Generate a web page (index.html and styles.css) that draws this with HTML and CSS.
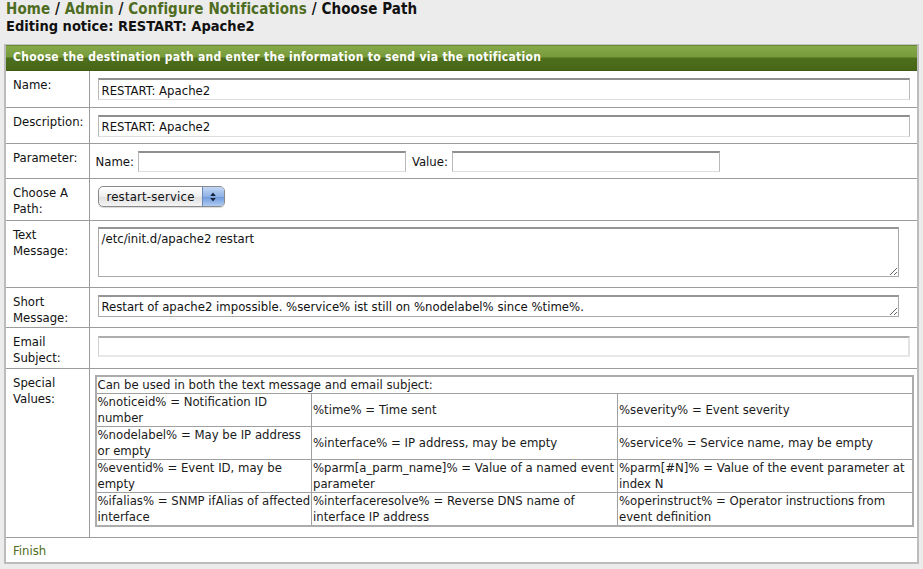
FILE: index.html
```html
<!DOCTYPE html>
<html>
<head>
<meta charset="utf-8">
<link rel="stylesheet" href="styles.css">
</head>
<body>
<div class="crumbs"><a href="#">Home</a> / <a href="#">Admin</a> / <a href="#">Configure Notifications</a> / Choose Path</div>
<h2 class="title">Editing notice: RESTART: Apache2</h2>
<table class="box">
  <colgroup><col class="col-lbl"><col class="col-val"></colgroup>
  <tr><th colspan="2" class="head">Choose the destination path and enter the information to send via the notification</th></tr>
  <tr class="r-name"><td class="lbl">Name:</td><td class="val"><input class="wide" type="text" value="RESTART: Apache2"></td></tr>
  <tr class="r-desc"><td class="lbl">Description:</td><td class="val"><input class="wide" type="text" value="RESTART: Apache2"></td></tr>
  <tr class="r-param"><td class="lbl">Parameter:</td><td class="val param"><span>Name:</span><input class="half" type="text"><span class="vlab">Value:</span><input class="half" type="text"></td></tr>
  <tr class="r-path"><td class="lbl">Choose A Path:</td><td class="val"><div class="select"><span class="sel-text">restart-service</span><span class="sel-arrows"><svg width="8" height="12" viewBox="0 0 8 12"><path d="M4 1.5 L6.8 5 H1.2 Z M4 10.5 L6.8 7 H1.2 Z" fill="#15233d"/></svg></span></div></td></tr>
  <tr class="r-text"><td class="lbl">Text Message:</td><td class="val"><textarea class="ta big">/etc/init.d/apache2 restart</textarea></td></tr>
  <tr class="r-short"><td class="lbl">Short Message:</td><td class="val"><textarea class="ta small">Restart of apache2 impossible. %service% ist still on %nodelabel% since %time%.</textarea></td></tr>
  <tr class="r-mail"><td class="lbl">Email Subject:</td><td class="val"><input class="wide dim" type="text"></td></tr>
  <tr class="r-special"><td class="lbl">Special Values:</td><td class="val sv">
    <table class="vals">
      <colgroup><col class="v1"><col class="v2"><col class="v3"></colgroup>
      <tr class="first"><td colspan="3">Can be used in both the text message and email subject:</td></tr>
      <tr><td>%noticeid% = Notification ID number</td><td>%time% = Time sent</td><td>%severity% = Event severity</td></tr>
      <tr><td>%nodelabel% = May be IP address or empty</td><td>%interface% = IP address, may be empty</td><td>%service% = Service name, may be empty</td></tr>
      <tr><td>%eventid% = Event ID, may be empty</td><td>%parm[a_parm_name]% = Value of a named event parameter</td><td>%parm[#N]% = Value of the event parameter at index N</td></tr>
      <tr><td>%ifalias% = SNMP ifAlias of affected interface</td><td>%interfaceresolve% = Reverse DNS name of interface IP address</td><td>%operinstruct% = Operator instructions from event definition</td></tr>
    </table>
  </td></tr>
  <tr class="r-finish"><td colspan="2" class="finish"><a href="#">Finish</a></td></tr>
</table>
</body>
</html>
```

FILE: styles.css
```css
html, body {
  margin: 0;
  padding: 0;
  background: #ececec;
  font-family: "DejaVu Sans Condensed", "DejaVu Sans", sans-serif;
  font-size: 13px;
  color: #111;
}
body {
  padding: 0 0 0 4px;
  width: 915px;
}
a {
  color: #4f6d22;
  text-decoration: none;
}
.crumbs {
  font-weight: bold;
  font-size: 15px;
  line-height: 17px;
  padding: 1px 0 0 2px;
  letter-spacing: 0.1px;
  color: #111;
}
.title {
  margin: 0;
  font-size: 14.5px;
  line-height: 17px;
  padding-left: 2px;
  padding-bottom: 9px;
}
.box {
  width: 915px;
  table-layout: fixed;
  border-collapse: collapse;
  background: #fff;
  border: 2px solid #bcbcbc;
  border-top: 1px solid #c4c4c4;
}
.col-lbl { width: 84px; }
.box > tbody > tr > td {
  border-top: 1px solid #9c9c9c;
  border-bottom: 1px solid #9c9c9c;
}
.head {
  text-align: left;
  color: #fff;
  font-size: 12px;
  letter-spacing: 0.3px;
  height: 24px;
  padding: 0 0 1px 7px;
  background: linear-gradient(#86a94a 0%, #76993a 48%, #4e6f1c 49%, #466616 100%);
  border-bottom: 1px solid #3f5a14;
}
.lbl {
  vertical-align: top;
  padding: 6px 0 0 7px;
  border-right: 1px solid #9c9c9c;
  line-height: 16px;
  color: #111;
}
.val {
  padding: 0 0 0 8px;
  vertical-align: middle;
}
.r-name .lbl { height: 30px; }
.r-desc .lbl { height: 29px; }
.r-param .lbl { height: 28px; }
.r-path .lbl { height: 35px; }
.r-text .lbl { height: 60px; }
.r-short .lbl { height: 33px; }
.r-mail .lbl { height: 34px; }
.r-path .val { vertical-align: top; padding-top: 7px; }
.r-text .val { vertical-align: top; padding-top: 6px; }
.r-short .val { vertical-align: top; padding-top: 7px; }
.r-mail .val { vertical-align: top; padding-top: 8px; }
.wide {
  display: block;
  box-sizing: border-box;
  width: 812px;
  height: 22px;
  margin: 0;
  padding: 1px 3px 0;
  border: 1px solid #b8b8b8;
  border-top: 2px solid #8f8f8f;
  border-bottom: 1px solid #dedede;
  font: 13px "DejaVu Sans Condensed", "DejaVu Sans", sans-serif;
  color: #111;
  background: #fff;
}
.wide.dim {
  height: 21px;
  border-top: 2px solid #adadad;
  border-left: 1px solid #d0d0d0;
  border-right: 2px solid #e2e2e2;
  border-bottom: 2px solid #e8e8e8;
}
.param {
  padding-left: 6px;
}
.param span, .param input { vertical-align: middle; }
.half {
  box-sizing: border-box;
  width: 268px;
  height: 21px;
  margin: 0 0 0 4px;
  padding: 0 3px;
  border: 1px solid #b8b8b8;
  border-top: 2px solid #8f8f8f;
  border-bottom: 1px solid #dedede;
  font: 13px "DejaVu Sans Condensed", "DejaVu Sans", sans-serif;
  background: #fff;
}
.vlab { margin-left: 6px; }
.select {
  position: relative;
  box-sizing: border-box;
  width: 127px;
  height: 21px;
  border: 1px solid #8a8a8a;
  border-radius: 5px;
  background: linear-gradient(#ffffff, #eeeeee 50%, #dedede 51%, #f4f4f4);
  display: flex;
  align-items: center;
  overflow: hidden;
  box-shadow: 0 1px 1px rgba(0,0,0,0.15);
}
.sel-text {
  padding-left: 8px;
  flex: 1;
  letter-spacing: 0.2px;
}
.sel-arrows {
  width: 21px;
  height: 100%;
  display: flex;
  align-items: center;
  justify-content: center;
  border-left: 1px solid #6c88b8;
  background: linear-gradient(#c3d7f4, #8fb2e6 50%, #6d98da 51%, #aecbf2);
}
.ta {
  display: block;
  box-sizing: border-box;
  width: 801px;
  margin: 0;
  padding: 2px 3px;
  border: 1px solid #aaaaaa;
  border-top: 2px solid #959595;
  font: 13px/16px "DejaVu Sans Condensed", "DejaVu Sans", sans-serif;
  color: #111;
  resize: both;
  background: #fff;
}
.ta.big { height: 50px; }
.ta.small { height: 22px; overflow: hidden; }
.sv {
  padding: 6px 5px 10px 5px;
  vertical-align: top;
}
.vals {
  width: 819px;
  table-layout: fixed;
  border-collapse: collapse;
  border: 2px solid #acacac;
}
.v1 { width: 216px; }
.v2 { width: 306px; }
.vals td {
  border: 1px solid #a0a0a0;
  padding: 0 0 0 1px;
  line-height: 16px;
  color: #1a1a1a;
  vertical-align: middle;
}
.finish {
  height: 24px;
  padding: 0 0 0 7px;
}
```
